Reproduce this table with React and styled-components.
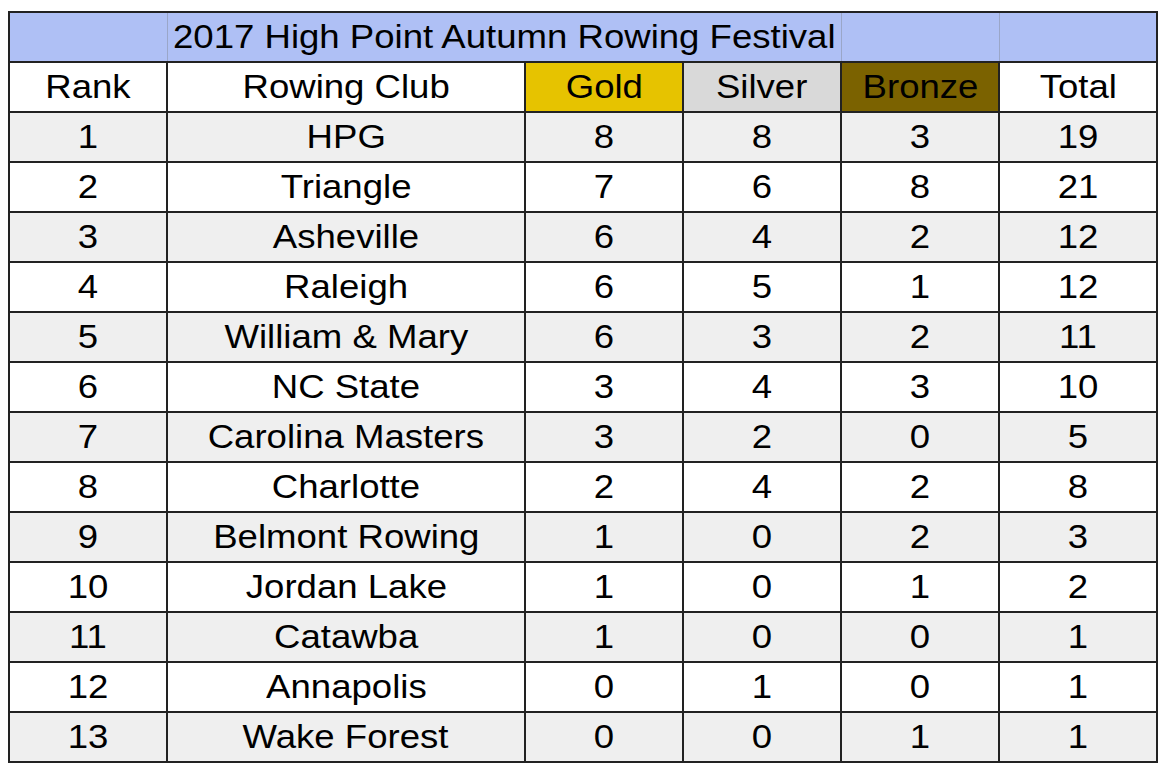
import React from "react";
import styled, { createGlobalStyle } from "styled-components";

const GlobalStyle = createGlobalStyle`
  body {
    margin: 0;
    background: #fff;
    font-family: "Liberation Sans", Arial, sans-serif;
  }
`;

const Page = styled.div`
  padding: 11px 0 0 8px;
`;

const Table = styled.table`
  border-collapse: collapse;
  table-layout: fixed;
  width: 1148px;
  font-size: 32.5px;
  color: #000;
  border: 2px solid #222;
`;

const Col = styled.col`
  width: ${(p) => p.$w}px;
`;

const TitleRow = styled.tr`
  height: 50px;
  background: #afc0f5;
`;

const TitleCell = styled.td`
  border: 1px solid #9aa6c8;
  border-top: 2px solid #222;
  border-bottom: 2px solid #222;
  padding: 0 0 0 ${(p) => (p.$title ? "5px" : "0")};
  text-align: left;
  white-space: nowrap;
  overflow: visible;
  &:first-child {
    border-left: 2px solid #222;
  }
  &:last-child {
    border-right: 2px solid #222;
  }
`;

const Row = styled.tr`
  height: 50px;
  background: ${(p) => (p.$shaded ? "#efefef" : "#fff")};
`;

const Cell = styled.td`
  border: 2px solid #222;
  text-align: center;
  padding: 0;
  line-height: 1;
  background: ${(p) => p.$bg || "transparent"};
  white-space: nowrap;
`;

/* the sheet's text is drawn a bit wider than Arial */
const Label = styled.span`
  display: inline-block;
  transform: scaleX(1.125);
  transform-origin: ${(p) => (p.$left ? "left center" : "center")};
`;

const medalBg = {
  Gold: "#e6c300",
  Silver: "#d9d9d9",
  Bronze: "#7b6200",
};

const rows = [
  [1, "HPG", 8, 8, 3, 19],
  [2, "Triangle", 7, 6, 8, 21],
  [3, "Asheville", 6, 4, 2, 12],
  [4, "Raleigh", 6, 5, 1, 12],
  [5, "William & Mary", 6, 3, 2, 11],
  [6, "NC State", 3, 4, 3, 10],
  [7, "Carolina Masters", 3, 2, 0, 5],
  [8, "Charlotte", 2, 4, 2, 8],
  [9, "Belmont Rowing", 1, 0, 2, 3],
  [10, "Jordan Lake", 1, 0, 1, 2],
  [11, "Catawba", 1, 0, 0, 1],
  [12, "Annapolis", 0, 1, 0, 1],
  [13, "Wake Forest", 0, 0, 1, 1],
];

const headers = ["Rank", "Rowing Club", "Gold", "Silver", "Bronze", "Total"];
const widths = [158, 358, 158, 158, 158, 158];

export default function App() {
  return (
    <Page>
      <GlobalStyle />
      <Table>
        <colgroup>
          {widths.map((w, i) => (
            <Col key={i} $w={w} />
          ))}
        </colgroup>
        <tbody>
          <TitleRow>
            <TitleCell />
            <TitleCell colSpan={3} $title>
              <Label $left>2017 High Point Autumn Rowing Festival</Label>
            </TitleCell>
            <TitleCell />
            <TitleCell />
          </TitleRow>
          <Row>
            {headers.map((h) => (
              <Cell key={h} $bg={medalBg[h]}>
                <Label>{h}</Label>
              </Cell>
            ))}
          </Row>
          {rows.map((r, i) => (
            <Row key={r[0]} $shaded={i % 2 === 0}>
              {r.map((v, j) => (
                <Cell key={j}>
                  <Label>{v}</Label>
                </Cell>
              ))}
            </Row>
          ))}
        </tbody>
      </Table>
    </Page>
  );
}
